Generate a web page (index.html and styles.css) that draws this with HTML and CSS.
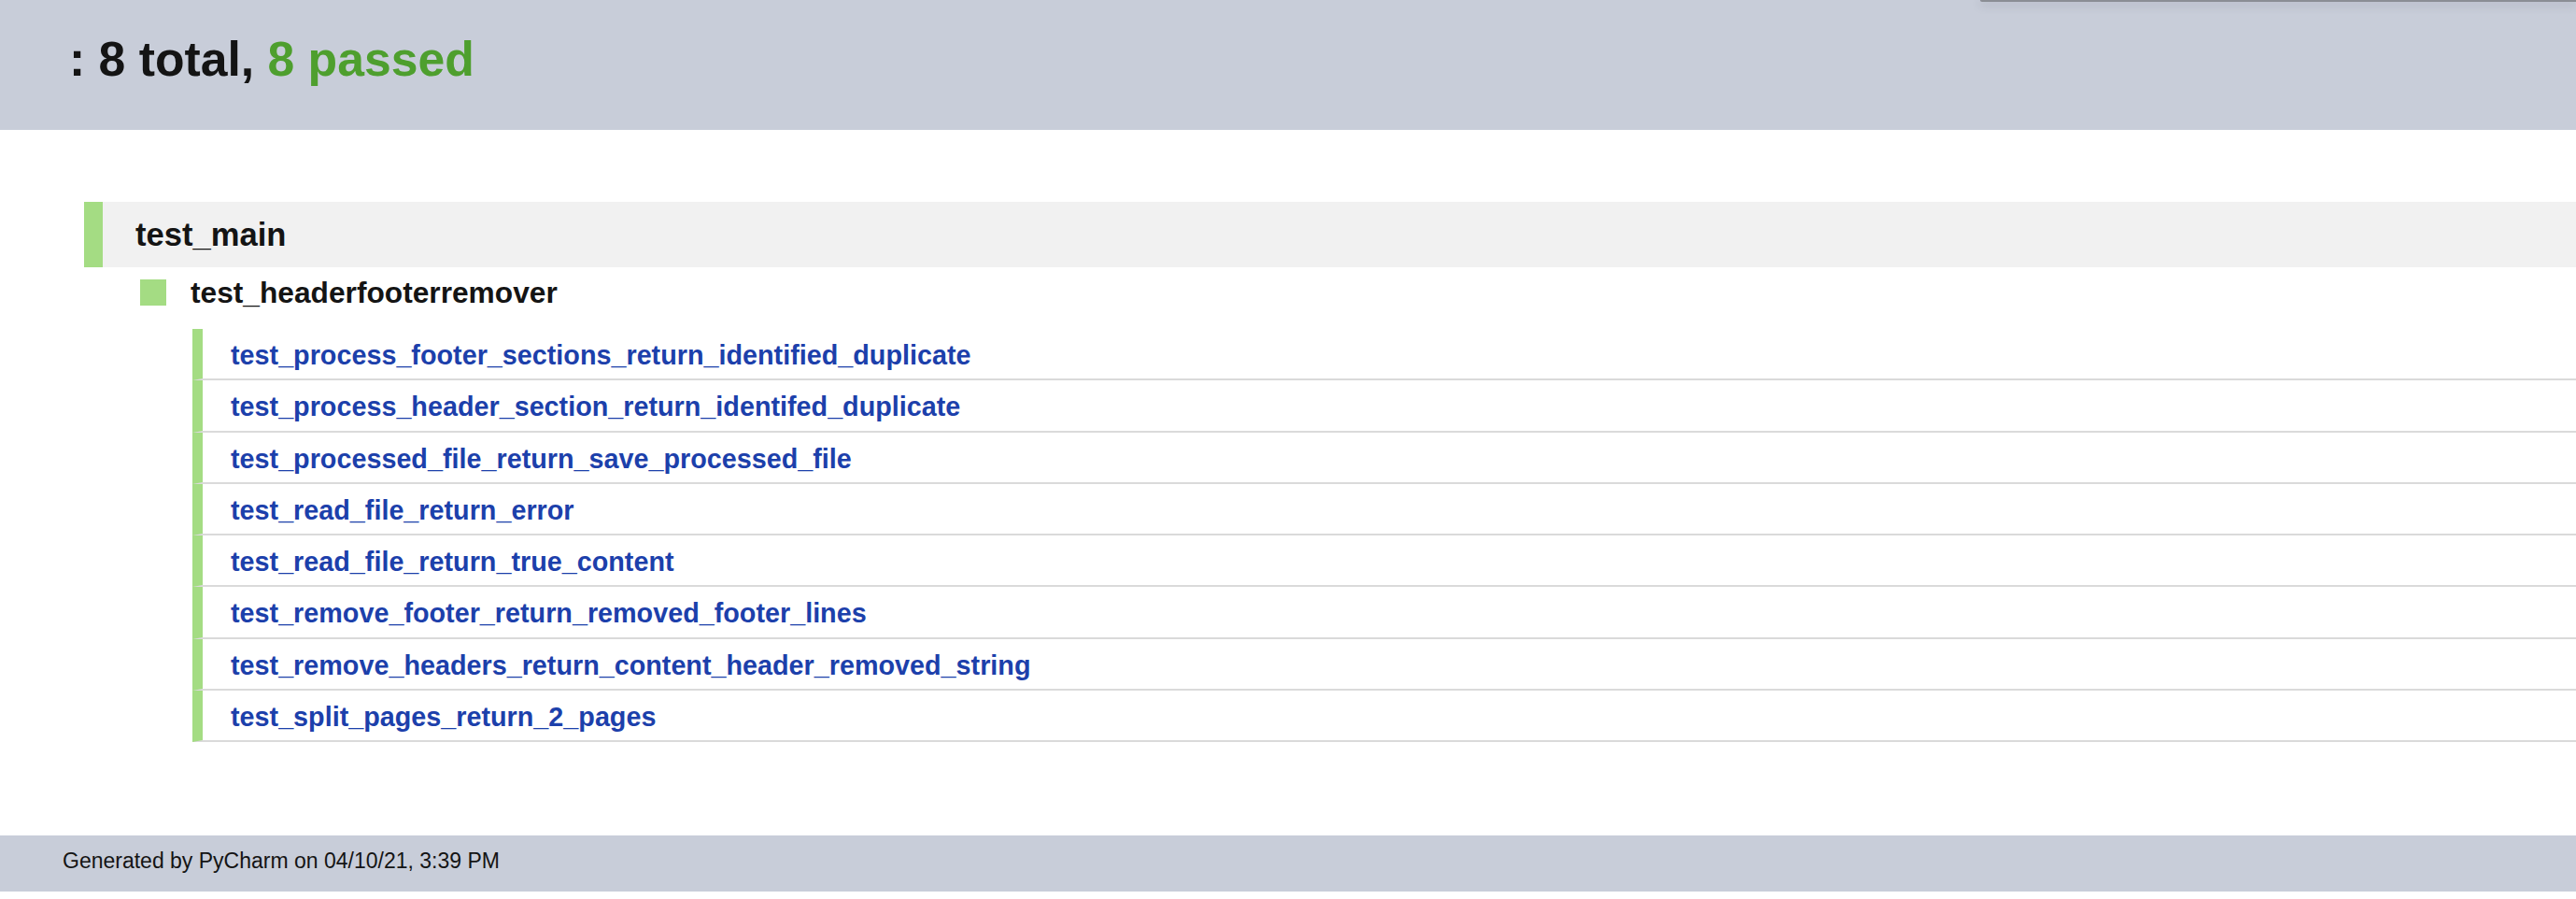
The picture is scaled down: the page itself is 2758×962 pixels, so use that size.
FILE: index.html
```html
<!DOCTYPE html>
<html lang="en">
<head>
<meta charset="utf-8">
<title>Test Results</title>
<link rel="stylesheet" href="styles.css">
</head>
<body>
<div class="window-edge"></div>
<header class="summary">
  <h1>: 8 total, <span class="passed">8 passed</span></h1>
</header>
<main class="content">
  <section class="suite">
    <h2 class="suite-title">test_main</h2>
    <div class="class-title">
      <span class="status-square"></span>
      <h3 class="class-name">test_headerfooterremover</h3>
    </div>
    <ul class="tests">
      <li class="test"><a href="#">test_process_footer_sections_return_identified_duplicate</a></li>
      <li class="test"><a href="#">test_process_header_section_return_identifed_duplicate</a></li>
      <li class="test"><a href="#">test_processed_file_return_save_processed_file</a></li>
      <li class="test"><a href="#">test_read_file_return_error</a></li>
      <li class="test"><a href="#">test_read_file_return_true_content</a></li>
      <li class="test"><a href="#">test_remove_footer_return_removed_footer_lines</a></li>
      <li class="test"><a href="#">test_remove_headers_return_content_header_removed_string</a></li>
      <li class="test"><a href="#">test_split_pages_return_2_pages</a></li>
    </ul>
  </section>
</main>
<footer class="footer">Generated by PyCharm on 04/10/21, 3:39 PM</footer>
</body>
</html>
```

FILE: styles.css
```css
html, body {
  margin: 0;
  padding: 0;
  background: #ffffff;
}

body {
  font-family: "Liberation Sans", Arial, sans-serif;
  color: #141414;
  position: relative;
  min-height: 962px;
  overflow: hidden;
}

.window-edge {
  position: absolute;
  top: 0;
  left: 2120px;
  right: 0;
  height: 2px;
  background: #8b8e95;
  box-shadow: 0 3px 10px rgba(60, 64, 80, 0.35);
  border-radius: 0 0 0 2px;
}

.summary {
  background: #c8cdd9;
  height: 139px;
  box-sizing: border-box;
  padding: 34px 0 0 74px;
}

.summary h1 {
  margin: 0;
  font-size: 51.7px;
  line-height: 58px;
  font-weight: bold;
  color: #141414;
}

.passed {
  color: #4e9f2e;
}

.content {
  padding-top: 77px;
}

.suite {
  margin-left: 90px;
}

.suite-title {
  margin: 0;
  background: #f1f1f1;
  border-left: 20px solid #a4dc83;
  height: 70px;
  line-height: 70px;
  padding-left: 35px;
  font-size: 34.6px;
  font-weight: bold;
  color: #141414;
}

.class-title {
  display: flex;
  align-items: flex-start;
  padding: 12px 0 17px 60px;
}

.status-square {
  width: 28px;
  height: 28px;
  margin-top: 1px;
  background: #a4dc83;
  flex: none;
}

.class-name {
  margin: -3px 0 3px 26px;
  font-size: 31.7px;
  line-height: 37px;
  font-weight: bold;
  color: #141414;
}

.tests {
  list-style: none;
  margin: 0 0 0 116px;
  padding: 0;
}

.test {
  border-left: 11px solid #a4dc83;
  border-bottom: 2px solid #dadada;
  padding: 3px 0 0 30px;
  line-height: 50.3px;
  height: 50.3px;
  font-size: 28.75px;
  font-weight: bold;
}

.test a {
  color: #1c40ab;
  text-decoration: none;
}

.footer {
  margin-top: 100px;
  background: #c8cdd9;
  height: 60px;
  box-sizing: border-box;
  padding: 14px 0 0 67px;
  font-size: 23px;
  line-height: 26px;
  color: #141414;
}
```
